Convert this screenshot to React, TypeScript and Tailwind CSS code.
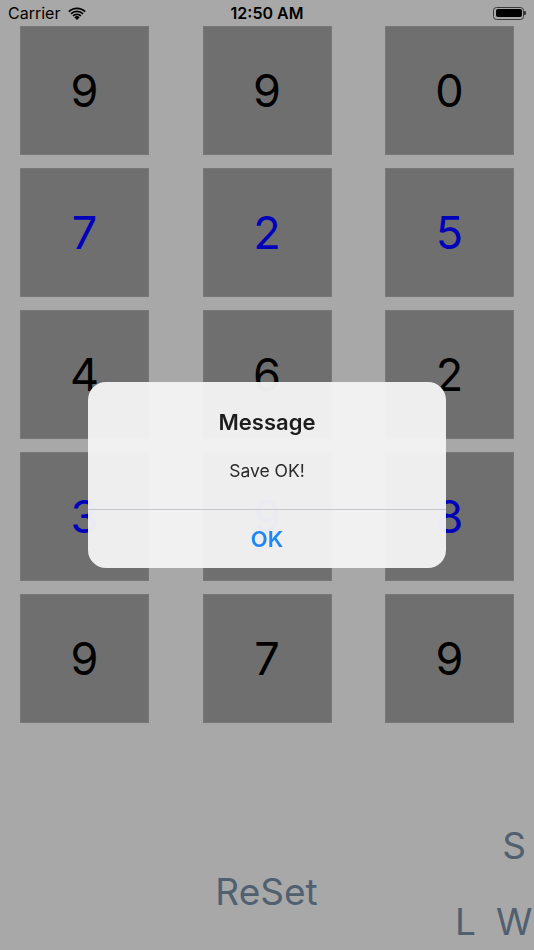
import React from "react";

const rows: { v: string; blue: boolean }[][] = [
  [
    { v: "9", blue: false },
    { v: "9", blue: false },
    { v: "0", blue: false },
  ],
  [
    { v: "7", blue: true },
    { v: "2", blue: true },
    { v: "5", blue: true },
  ],
  [
    { v: "4", blue: false },
    { v: "6", blue: false },
    { v: "2", blue: false },
  ],
  [
    { v: "3", blue: true },
    { v: "9", blue: true },
    { v: "8", blue: true },
  ],
  [
    { v: "9", blue: false },
    { v: "7", blue: false },
    { v: "9", blue: false },
  ],
];

function Wifi() {
  return (
    <svg width="18" height="13" viewBox="0 0 18 13" className="ml-[8px]">
      <path d="M9 13 L6.3 10.2 A3.9 3.9 0 0 1 11.7 10.2 Z" fill="#000" />
      <path
        d="M4.4 8.3 A6.6 6.6 0 0 1 13.6 8.3 L12.4 9.6 A4.9 4.9 0 0 0 5.6 9.6 Z"
        fill="#000"
      />
      <path
        d="M2.3 6.2 A9.5 9.5 0 0 1 15.7 6.2 L14.5 7.4 A7.8 7.8 0 0 0 3.5 7.4 Z"
        fill="#000"
      />
      <path
        d="M0.2 4.1 A12.5 12.5 0 0 1 17.8 4.1 L16.6 5.3 A10.8 10.8 0 0 0 1.4 5.3 Z"
        fill="#000"
      />
    </svg>
  );
}

function Battery() {
  return (
    <div className="flex items-center">
      <div className="w-[31px] h-[13px] rounded-[3.5px] border border-[#3a3a3a] p-[1.5px]">
        <div className="w-full h-full rounded-[2px] bg-black" />
      </div>
      <div className="w-[1.5px] h-[4px] bg-[#3a3a3a] rounded-r-[1px]" />
    </div>
  );
}

export default function App() {
  return (
    <div
      className="relative w-[534px] h-[950px] bg-[#a8a8a8] overflow-hidden"
      style={{ fontFamily: "Inter, 'Liberation Sans', sans-serif" }}
    >
      {/* status bar */}
      <div className="h-[26px] flex items-center justify-between px-[8px] text-black">
        <div className="flex items-center w-[120px]">
          <span className="text-[16px] leading-none">Carrier</span>
          <Wifi />
        </div>
        <span className="text-[16px] font-semibold leading-none">12:50 AM</span>
        <div className="w-[120px] flex justify-end">
          <Battery />
        </div>
      </div>

      {/* grid */}
      <div className="grid grid-cols-[129px_129px_129px] justify-between gap-y-[13px] px-[20px]">
        {rows.flat().map((c, i) => (
          <div
            key={i}
            className="h-[129px] bg-[#6f6f6f] border border-[#777777] flex items-center justify-center"
          >
            <span
              className={
                "text-[45px] leading-none " +
                (c.blue ? "text-[#0000bb]" : "text-black")
              }
            >
              {c.v}
            </span>
          </div>
        ))}
      </div>

      {/* bottom controls */}
      <div className="relative h-[227px]">
        <div className="absolute right-[8px] top-[104px] text-[37px] leading-none text-[#506070]">
          S
        </div>
        <div className="pt-[150px] flex justify-center text-[37px] leading-none text-[#506070] pr-[1px]">
          ReSet
        </div>
        <div className="absolute left-[455px] top-[180px] text-[37px] leading-none text-[#506070]">
          L
        </div>
        <div className="absolute left-[496px] top-[180px] text-[37px] leading-none text-[#506070]">
          W
        </div>
      </div>

      {/* alert */}
      <div className="absolute inset-0 flex items-center justify-center">
        <div className="w-[358px] h-[186px] rounded-[18px] bg-[#f4f4f5]/[0.96] backdrop-blur-[1px] flex flex-col items-center text-center">
          <div className="pt-[26px] h-[54px] text-[22px] leading-[28px] font-semibold text-[#1d1d1d]">
            Message
          </div>
          <div className="mt-[24px] h-[22px] text-[17.5px] leading-[22px] text-[#2a2a2a]">
            Save OK!
          </div>
          <div className="mt-[27px] w-full h-px bg-[#c6c6cc]" />
          <div className="flex-1 w-full flex items-center justify-center text-[22px] font-semibold text-[#1f87f5]">
            OK
          </div>
        </div>
      </div>
    </div>
  );
}
